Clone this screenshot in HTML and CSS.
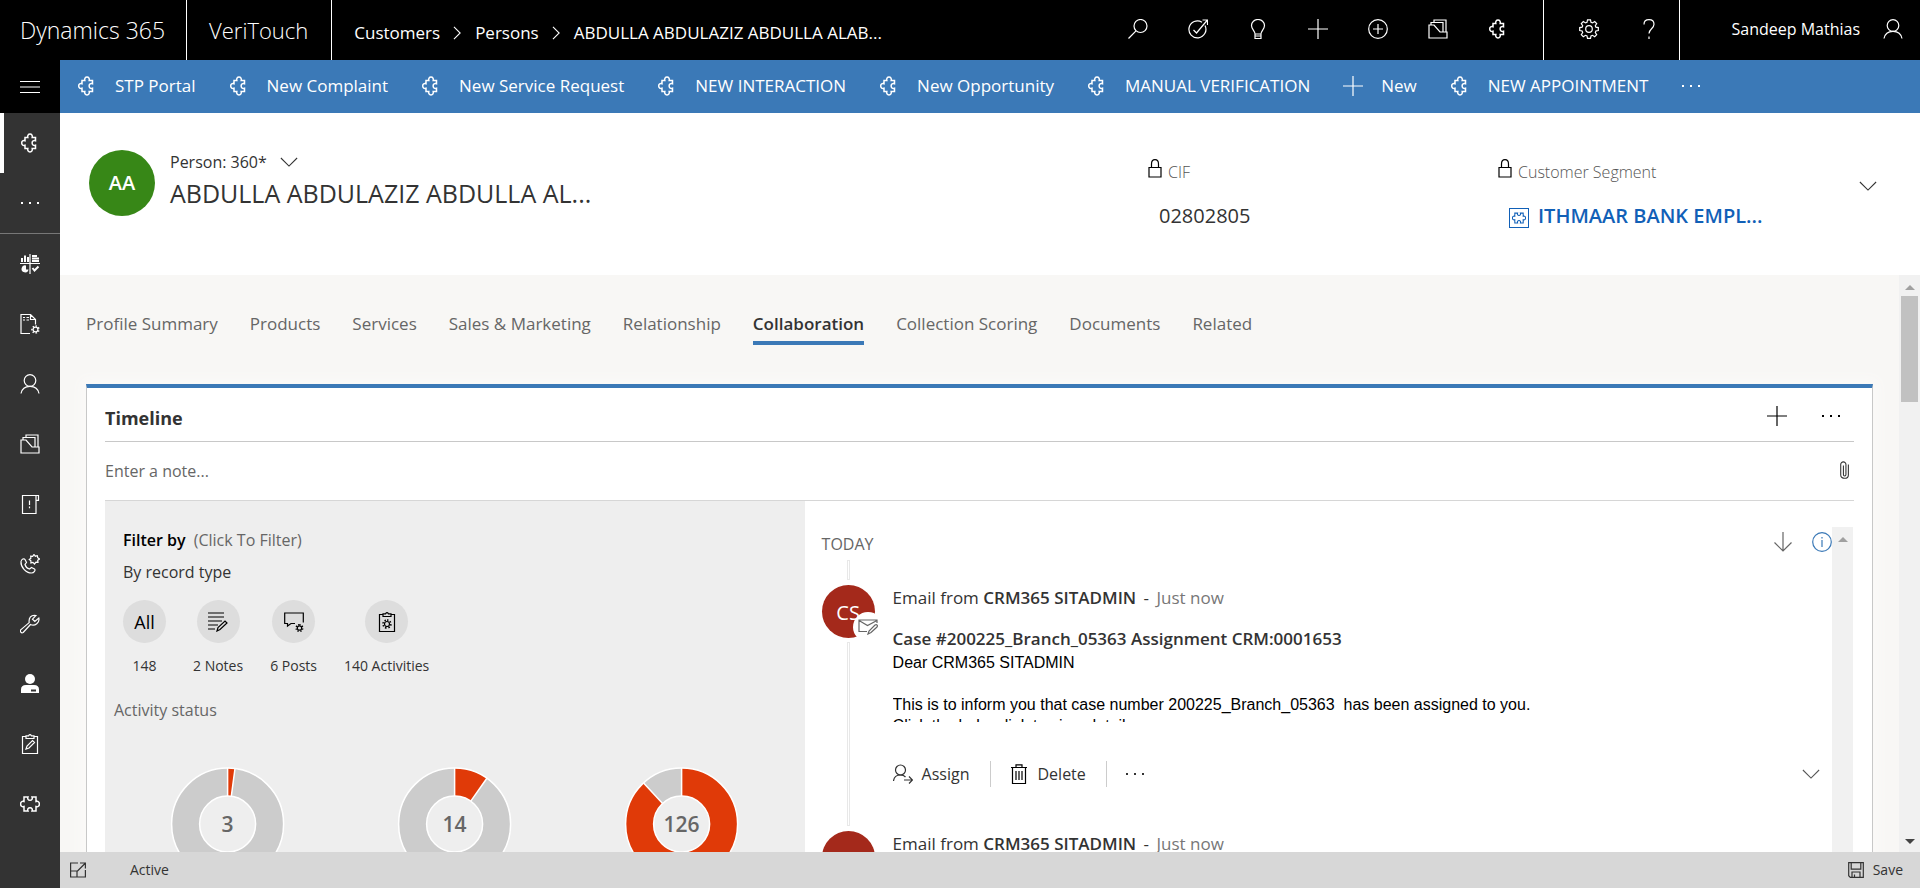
FILE: index.html
```
<!DOCTYPE html>
<html lang="en">
<head>
<meta charset="utf-8">
<title>Person: 360</title>
<link rel="stylesheet" href="styles.css">
</head>
<body>
<svg class="sprite" aria-hidden="true">
  <symbol id="puzzle" viewBox="0 0 20 20"><path stroke-width="1.500" d="M5 4.500h2.800c-.5-1.800.4-3.500 2.200-3.500s2.700 1.700 2.200 3.500H15.500v3.300c-1.800-.6-3.400.3-3.400 2.200s1.600 2.800 3.400 2.200v3.300h-3.300c.5 1.800-.4 3.500-2.200 3.500s-2.700-1.700-2.200-3.500H5v-3.300c-1.800.6-3.300-.3-3.300-2.200s1.500-2.800 3.300-2.200z"/></symbol>
  <symbol id="piece" viewBox="0 0 20 20"><path stroke-width="1.500" d="M4 3h4c-.8 2 .2 3.300 2 3.300S12.800 5 12 3h4v4.500c1.900-.7 3.400.5 3.400 2.500s-1.500 3.200-3.400 2.500V17h-4c.8-2-.2-3.300-2-3.300S7.200 15 8 17H4v-4.500C2.100 13.200.6 12 .6 10S2.100 6.800 4 7.500z"/></symbol>
  <symbol id="plus" viewBox="0 0 20 20"><path d="M10 0v20M0 10h20"/></symbol>
  <symbol id="dots" viewBox="0 0 20 20"><path class="solid" d="M1 9h2v2H1zM9 9h2v2H9zM17 9h2v2h-2z"/></symbol>
  <symbol id="right" viewBox="0 0 10 18"><path d="M1 2l7 7-7 7"/></symbol>
  <symbol id="down" viewBox="0 0 20 12"><path d="M1 1l9 9 9-9"/></symbol>
  <symbol id="search" viewBox="0 0 20 20"><circle cx="12.500" cy="7" r="6.500"/><path d="M8 11.800L.5 19.500"/></symbol>
  <symbol id="task" viewBox="0 0 20 20"><path d="M14 3.200A8.500 8.500 0 1 0 17 6.500M5.500 11l3 3L19 1.500M14.500 1h5v5"/></symbol>
  <symbol id="bulb" viewBox="0 0 20 20"><path d="M7 15c0-3-3.500-5-3.500-8.500a6.500 6 0 0 1 13 0C16.500 10 13 12 13 15zM7 15v4.500h6V15M7 17h6"/></symbol>
  <symbol id="addcircle" viewBox="0 0 20 20"><circle cx="10" cy="10" r="9.300"/><path d="M10 5v10M5 10h10"/></symbol>
  <symbol id="folder" viewBox="0 0 20 20"><path d="M1 19V6h5l6 7h7v6zM3 6V3.500h12V13M6 3.500V1h12v12"/></symbol>
  <symbol id="gear" viewBox="0 0 20 20"><path d="M8.500.8h3l.5 2.500 1.500.6 2.200-1.400 2 2-1.400 2.200.6 1.500 2.400.4v2.900l-2.400.5-.6 1.500 1.400 2.200-2 2-2.200-1.400-1.500.6-.5 2.400h-3L8 16.900l-1.500-.6-2.200 1.400-2-2 1.400-2.200-.6-1.500-2.400-.5V8.600l2.400-.4.6-1.500-1.400-2.200 2-2 2.200 1.400L8 3.300z"/><circle cx="10" cy="10" r="3.300"/></symbol>
  <symbol id="help" viewBox="0 0 20 20"><path d="M5 5.500C5 2.500 7 .7 10 .7s5 1.800 5 4.600c0 4.200-5 4.700-5 9.200M10 17.500V20"/></symbol>
  <symbol id="person" viewBox="0 0 20 20"><circle cx="10" cy="6.500" r="5.800"/><path d="M1 19.500c.8-4.500 4-7.200 9-7.200s8.200 2.700 9 7.200"/></symbol>
  <symbol id="personfill" viewBox="0 0 20 20"><circle class="solid" cx="10" cy="5" r="5"/><path class="solid" d="M1 19v-3.500Q1 11 6 11h8q5 0 5 4.500V19zM11 15.500v2h5v-2z" fill-rule="evenodd"/></symbol>
  <symbol id="menu" viewBox="0 0 20 20"><path stroke-width="1" d="M0 4.500h20M0 10h20M0 15.500h20"/></symbol>
  <symbol id="dash" viewBox="0 0 20 20"><path d="M10 0v20M0 9.500h20"/><path stroke-width="2" d="M2 8V4M5 8V1.500M8 8V3M12 2h5M12 4.500h7M12 7h7M12.500 14l2 2.500 4-4"/><path class="solid" d="M6 11.500a3.500 3.500 0 1 0 2.500 4H6z"/></symbol>
  <symbol id="docgear" viewBox="0 0 20 20"><path d="M10 19.500H1v-19h9.500l5 5v5M10.500.5v5h5M3 3.500h2M6.500 3.500H9M3 6h2M6.500 6H9"/><circle cx="15.500" cy="15.500" r="2.400"/><path stroke-dasharray="1.400 1.600" stroke-width="1.500" d="M15.500 12a3.500 3.500 0 1 1-.1 0"/></symbol>
  <symbol id="book" viewBox="0 0 20 20"><path d="M2.500 1.500H16v18H2.500zM15 1.500h3.500v4.800H16M9.500 6.500V11M9.500 12.500v1.700"/></symbol>
  <symbol id="phone" viewBox="0 0 20 20"><path d="M1 7.500C1.500 5 4 4 5 5.500l1.500 3L5 10.500c.5 2 2.500 4 4.500 4.500l2-1.500 3 1.500c1.500 1-.5 4-3 4C6 19 .5 13 1 7.500z"/><path d="M14 .5l1.300 1.700 2-.5.4 2L19.500 5l-1.800 1.300.3 2-2-.1L14.500 10l-1.600-1.600-2 .5V6.700L9.300 5.500l1.600-1.300-.2-2 2 .2z"/></symbol>
  <symbol id="wrench" viewBox="0 0 20 20"><path d="M10.500 10.500l-7.300 8c-2 1-3.500-1-2.500-2.700l8.500-7.200C8.500 4 11 .5 16 1.500l-3.500 3.700 2.300 2.300L18.800 4c1.200 4.500-3.800 8.500-8.300 6.500z"/></symbol>
  <symbol id="clippen" viewBox="0 0 20 20"><path d="M6 2.500H2.500v17h15v-17H14M6 1.800h2.500Q10-.5 11.500 1.800H14v2.700H6zM6 15l1-3 5.500-5.500 2 2L9 14z"/></symbol>
  <symbol id="clipgear" viewBox="0 0 20 20"><path d="M6 2.500H2.500v17h15v-17H14M6 1.800h2.500Q10-.5 11.500 1.800H14v2.700H6z"/><circle cx="10" cy="12" r="2.500"/><path stroke-dasharray="1.500 1.640" stroke-width="1.500" d="M10 8a4 4 0 1 1-.1 0"/></symbol>
  <symbol id="lock" viewBox="0 0 14 19"><path d="M1 8.500h12v9.500H1zM3.500 8.500V5C3.500 2 5 .7 7 .7s3.500 1.300 3.500 4.300v3.500"/></symbol>
  <symbol id="clip" viewBox="0 0 10 20"><path d="M9.300 4v11.500c0 5-8.500 5-8.500 0V4c0-4 5.800-4 5.800 0v11c0 2.200-2.800 2.200-2.800 0V5"/></symbol>
  <symbol id="arrow" viewBox="0 0 20 20"><path d="M10 0v19M1.500 10.500L10 19l8.500-8.500"/></symbol>
  <symbol id="info" viewBox="0 0 20 20"><circle cx="10" cy="10" r="9.300"/><path d="M10 8v7M10 5v1.500"/></symbol>
  <symbol id="notes" viewBox="0 0 20 20"><path d="M0 1h16M0 5h16M0 9h14M0 13h10M0 17h7M9 19l1-3.500 7-6.500 2 2-7 6.500z"/></symbol>
  <symbol id="posts" viewBox="0 0 20 20"><path d="M11 11.500H7L3.500 14v-2.500H.7V1h18.600v9.500"/><circle cx="15.500" cy="16" r="2.200"/><path stroke-dasharray="1.200 1.430" stroke-width="1.500" d="M15.500 12.700a3.300 3.300 0 1 1-.1 0"/></symbol>
  <symbol id="mail" viewBox="0 0 20 16"><path d="M9 12.500H1V1h18v3M1 1.500l8.500 5 9.500-5M10 15l1-3 6-6c2-1 3 .5 2 2l-6 5.500z"/></symbol>
  <symbol id="assign" viewBox="0 0 20 20"><circle cx="7.500" cy="6" r="5"/><path d="M.5 17c.5-4 3-6 7-6 2.500 0 4 .8 5 2M11 16h8M16 12.500l3.500 3.500-3.500 3.500"/></symbol>
  <symbol id="trash" viewBox="0 0 16 20"><path d="M0 3.500h16M5 3V.8h6V3M1.500 3.500v16h13v-16M5 7v9M8 7v9M11 7v9"/></symbol>
  <symbol id="popout" viewBox="0 0 16 16"><path d="M8 1H.6v14h14.800V8M.6 9H7v6M7.500 9L15 1.500M10 1h5.400v5.500"/></symbol>
  <symbol id="save" viewBox="0 0 16 16"><path d="M.7.7h14.600v14.600h-13L.7 13.700zM3.200.7v6.500h9.600V.7M4 15v-5h8v5M6.500 15v-2.500"/></symbol>
</svg>

<header class="topbar">
  <div class="brand">Dynamics 365</div>
  <div class="app">VeriTouch</div>
  <nav class="crumbs">
    <a href="#">Customers</a><svg class="crumb-sep"><use href="#right"/></svg>
    <a href="#">Persons</a><svg class="crumb-sep"><use href="#right"/></svg>
    <a href="#">ABDULLA ABDULAZIZ ABDULLA ALAB...</a>
  </nav>
  <div class="tools">
    <button aria-label="Search"><svg class="ic"><use href="#search"/></svg></button>
    <button aria-label="Tasks"><svg class="ic"><use href="#task"/></svg></button>
    <button aria-label="Insights"><svg class="ic"><use href="#bulb"/></svg></button>
    <button aria-label="New"><svg class="ic"><use href="#plus"/></svg></button>
    <button aria-label="Quick create"><svg class="ic"><use href="#addcircle"/></svg></button>
    <button aria-label="Records"><svg class="ic"><use href="#folder"/></svg></button>
    <button aria-label="Extensions"><svg class="ic"><use href="#puzzle"/></svg></button>
  </div>
  <div class="tools settings">
    <button aria-label="Settings"><svg class="ic"><use href="#gear"/></svg></button>
    <button aria-label="Help"><svg class="ic"><use href="#help"/></svg></button>
  </div>
  <button class="user">Sandeep Mathias <svg class="ic"><use href="#person"/></svg></button>
</header>

<div class="shell">
  <nav class="side">
    <button class="side-menu" aria-label="Menu"><svg class="ic"><use href="#menu"/></svg></button>
    <button class="on" aria-label="Home"><svg class="ic"><use href="#puzzle"/></svg></button>
    <button class="ruled" aria-label="More"><svg class="ic"><use href="#dots"/></svg></button>
    <button aria-label="Dashboards"><svg class="ic"><use href="#dash"/></svg></button>
    <button aria-label="Processes"><svg class="ic"><use href="#docgear"/></svg></button>
    <button aria-label="Persons"><svg class="ic"><use href="#person"/></svg></button>
    <button aria-label="Accounts"><svg class="ic"><use href="#folder"/></svg></button>
    <button aria-label="Cases"><svg class="ic"><use href="#book"/></svg></button>
    <button aria-label="Calls"><svg class="ic"><use href="#phone"/></svg></button>
    <button aria-label="Service"><svg class="ic"><use href="#wrench"/></svg></button>
    <button aria-label="Contacts"><svg class="ic"><use href="#personfill"/></svg></button>
    <button aria-label="Activities"><svg class="ic"><use href="#clippen"/></svg></button>
    <button aria-label="Extensions"><svg class="ic"><use href="#piece"/></svg></button>
  </nav>

  <div class="page">
    <div class="commands">
      <button><svg class="ic"><use href="#puzzle"/></svg>STP Portal</button>
      <button><svg class="ic"><use href="#puzzle"/></svg>New Complaint</button>
      <button><svg class="ic"><use href="#puzzle"/></svg>New Service Request</button>
      <button><svg class="ic"><use href="#puzzle"/></svg>NEW INTERACTION</button>
      <button><svg class="ic"><use href="#puzzle"/></svg>New Opportunity</button>
      <button><svg class="ic"><use href="#puzzle"/></svg>MANUAL VERIFICATION</button>
      <button><svg class="ic"><use href="#plus"/></svg>New</button>
      <button><svg class="ic"><use href="#puzzle"/></svg>NEW APPOINTMENT</button>
      <button aria-label="More commands"><svg class="ic"><use href="#dots"/></svg></button>
    </div>

    <section class="record">
      <div class="avatar">AA</div>
      <div class="identity">
        <button class="form-pick">Person: 360* <svg class="chev"><use href="#down"/></svg></button>
        <h1>ABDULLA ABDULAZIZ ABDULLA AL...</h1>
      </div>
      <dl class="field">
        <dt><svg class="lock"><use href="#lock"/></svg>CIF</dt>
        <dd>02802805</dd>
      </dl>
      <dl class="field">
        <dt><svg class="lock"><use href="#lock"/></svg>Customer Segment</dt>
        <dd><a href="#"><svg class="entity"><use href="#piece"/></svg>ITHMAAR BANK EMPL...</a></dd>
      </dl>
      <button class="expand" aria-label="Expand header"><svg class="chev"><use href="#down"/></svg></button>
    </section>

    <div class="scroller">
      <main class="content">
        <nav class="tabs">
          <a href="#">Profile Summary</a><a href="#">Products</a><a href="#">Services</a><a href="#">Sales &amp; Marketing</a><a href="#">Relationship</a><a href="#" class="current">Collaboration</a><a href="#">Collection Scoring</a><a href="#">Documents</a><a href="#">Related</a>
        </nav>
        <section class="card">
          <div class="card-head">
            <h2>Timeline</h2>
            <button aria-label="Add"><svg class="ic"><use href="#plus"/></svg></button>
            <button aria-label="More"><svg class="ic"><use href="#dots"/></svg></button>
          </div>
          <div class="note">
            <input type="text" aria-label="Note" placeholder="Enter a note...">
            <button aria-label="Attach"><svg class="clip"><use href="#clip"/></svg></button>
          </div>
          <div class="split">
            <aside class="filter">
              <p class="filter-title"><b>Filter by</b> (Click To Filter)</p>
              <p class="filter-sub">By record type</p>
              <div class="types">
                <button><span class="disc">All</span>148</button>
                <button><span class="disc"><svg class="ic"><use href="#notes"/></svg></span>2 Notes</button>
                <button><span class="disc"><svg class="ic"><use href="#posts"/></svg></span>6 Posts</button>
                <button><span class="disc"><svg class="ic"><use href="#clipgear"/></svg></span>140 Activities</button>
              </div>
              <p class="status">Activity status</p>
              <div class="donuts">
                <svg class="donut" viewBox="-57 -57 114 114"><circle class="rest" r="42"/><circle class="part" r="42" pathLength="100" stroke-dasharray="2.100 97.900" transform="rotate(-90)"/><path class="cut" d="M0-28V-56M3.700-27.700L7.400-55.500"/><circle class="edge" r="56"/><circle class="edge" r="28"/><text y="8">3</text></svg>
                <svg class="donut" viewBox="-57 -57 114 114"><circle class="rest" r="42"/><circle class="part" r="42" pathLength="100" stroke-dasharray="9.800 90.200" transform="rotate(-90)"/><path class="cut" d="M0-28V-56M16.200-22.900L32.300-45.700"/><circle class="edge" r="56"/><circle class="edge" r="28"/><text y="8">14</text></svg>
                <svg class="donut" viewBox="-57 -57 114 114"><circle class="rest" r="42"/><circle class="part" r="42" pathLength="100" stroke-dasharray="88.100 11.900" transform="rotate(-90)"/><path class="cut" d="M0-28V-56M-19-20.500L-38-41"/><circle class="edge" r="56"/><circle class="edge" r="28"/><text y="8">126</text></svg>
              </div>
            </aside>
            <div class="feed">
              <div class="feed-list">
                <div class="day">
                  <h3>TODAY</h3>
                  <button aria-label="Sort"><svg class="ic"><use href="#arrow"/></svg></button>
                  <button class="info" aria-label="Info"><svg class="ic"><use href="#info"/></svg></button>
                </div>
                <div class="lead"></div>
                <article class="entry">
                  <div class="rail">
                    <div class="who">CS<span class="badge"><svg class="mail"><use href="#mail"/></svg></span></div>
                    <div class="line"></div>
                  </div>
                  <div class="entry-main">
                    <p class="from">Email from <b>CRM365 SITADMIN</b> <i>-</i> <span>Just now</span></p>
                    <h4>Case #200225_Branch_05363 Assignment CRM:0001653</h4>
                    <div class="mail-body">Dear CRM365 SITADMIN<br><br>This is to inform you that case number 200225_Branch_05363&nbsp; has been assigned to you.<br>Click the below link to view details</div>
                    <div class="actions">
                      <button><svg class="ic"><use href="#assign"/></svg>Assign</button>
                      <button><svg class="trash"><use href="#trash"/></svg>Delete</button>
                      <button class="plain" aria-label="More"><svg class="ic"><use href="#dots"/></svg></button>
                      <button class="plain more" aria-label="Expand"><svg class="chev"><use href="#down"/></svg></button>
                    </div>
                  </div>
                </article>
                <article class="entry">
                  <div class="rail"><div class="who">CS</div></div>
                  <div class="entry-main">
                    <p class="from">Email from <b>CRM365 SITADMIN</b> <i>-</i> <span>Just now</span></p>
                  </div>
                </article>
              </div>
              <div class="bar"><span class="up"></span></div>
            </div>
          </div>
        </section>
      </main>
      <div class="bar main-bar"><span class="up"></span><span class="thumb"></span><span class="dn"></span></div>
    </div>

    <footer class="foot">
      <button aria-label="Pop out"><svg class="sm"><use href="#popout"/></svg></button>
      <span class="state">Active</span>
      <button class="save"><svg class="sm"><use href="#save"/></svg>Save</button>
    </footer>
  </div>
</div>
</body>
</html>
```
FILE: styles.css
```
* { box-sizing: border-box; margin: 0; padding: 0; }
body {
  height: 100vh;
  display: flex;
  flex-direction: column;
  overflow: hidden;
  font-family: "Open Sans", "Noto Sans", sans-serif;
  font-size: 16px;
  line-height: 24px;
  color: #333;
  background: #fff;
}
button, input { font: inherit; color: inherit; background: none; border: 0; }
button { display: flex; align-items: center; white-space: nowrap; }
a { color: inherit; text-decoration: none; }
svg { flex: none; fill: none; stroke: currentColor; stroke-width: 1.2; overflow: visible; }
.solid { fill: currentColor; stroke: none; }
.sprite { position: absolute; width: 0; height: 0; }
.ic { width: 20px; height: 20px; }
.sm { width: 16px; height: 16px; }
.chev { width: 18px; height: 11px; }

.topbar { flex: none; display: flex; height: 60px; background: #000; color: #fff; }
.brand, .app {
  display: flex; align-items: center;
  padding: 0 21px 0 20px;
  border-right: 1px solid #fff;
  font-size: 23px; font-weight: 300; line-height: 32px;
}
.app { padding: 0 23px 0 22px; font-size: 22px; }
.crumbs { display: flex; align-items: center; padding: 6px 0 0 22px; white-space: nowrap; font-size: 17px; }
.crumb-sep { width: 9px; height: 16px; margin: 0 13px; }
.tools { display: flex; padding-right: 15px; margin-left: auto; }
.tools button { width: 60px; justify-content: center; }
.tools button, .user { padding-bottom: 2px; }
.settings { margin: 0; padding: 0 0 0 15px; border: solid #fff; border-width: 0 1px; }
.user { width: 240px; justify-content: flex-end; gap: 23px; padding-right: 17px; }

.shell { flex: 1; min-height: 0; display: flex; }
.side { flex: none; width: 60px; background: #333; color: #fff; }
.side button { width: 60px; height: 60px; justify-content: center; }
.side .side-menu { height: 53px; background: #000; }
.side .on { border-left: 4px solid #fff; padding-right: 4px; }
.side .ruled { height: 61px; border-bottom: 1px solid #777; }

.page { flex: 1; min-width: 0; display: flex; flex-direction: column; }
.commands { flex: none; display: flex; height: 53px; padding: 0 0 2px 17px; gap: 33px; font-size: 17px; background: #3b79b7; color: #fff; }
.commands button { gap: 18px; }

.record { flex: none; display: flex; height: 162px; padding: 37px 32px 0 29px; }
.avatar {
  width: 66px; height: 66px; border-radius: 50%;
  background: #378717; color: #fff;
  display: flex; align-items: center; justify-content: center;
  font-size: 20px; font-weight: 600;
}
.identity { flex: 1; padding-left: 15px; }
.form-pick { gap: 13px; }
h1 { font-size: 25px; font-weight: 400; line-height: 38px; }
.field { width: 350px; padding-top: 9px; }
.field dt { display: flex; align-items: center; gap: 6px; font-weight: 300; color: #555; }
.lock { width: 14px; height: 19px; margin-bottom: 6px; color: #000; }
.field dd { padding: 18px 0 0 11px; font-size: 20px; line-height: 28px; }
.field a { display: flex; align-items: center; gap: 9px; font-weight: 600; color: #1160b7; }
.entity { width: 20px; height: 20px; padding: 2px; border: 1px solid; margin-top: 4px; }
.expand { width: 40px; height: 72px; justify-content: center; }

.scroller { flex: 1; min-height: 0; display: flex; overflow: hidden; background: #f8f7f5; }
.content { flex: 1; min-width: 0; padding: 37px 26px 0 26px; }
.tabs { display: flex; gap: 32px; font-size: 17px; color: #666; }
.tabs a { height: 33px; }
.tabs .current { color: #333; font-weight: 600; border-bottom: 4px solid #3b79b7; }
.card {
  margin-top: 39px; padding: 0 18px;
  border: 1px solid #c8c8c8; border-top: 4px solid #3b79b7;
  background: #fff; box-shadow: 0 0 12px 4px #fbfaf9;
}
.card-head { display: flex; height: 54px; border-bottom: 1px solid #c8c8c8; padding: 2px 13px 0 0; gap: 34px; color: #000; }
h2 { flex: 1; font-size: 18px; line-height: 56px; font-weight: 700; color: #333; }
.note { display: flex; height: 59px; border-bottom: 1px solid #d6d6d6; padding-right: 5px; }
.note input { flex: 1; outline: 0; }
.note input::placeholder { color: #666; opacity: 1; }
.note button { padding-bottom: 3px; }
.clip { width: 9px; height: 20px; }
.split { display: flex; }
.filter { width: 40%; padding: 27px 9px 0; background: #eee; height: 420px; }
.filter-title, .filter-sub, .types { padding-left: 9px; }
.filter-title { color: #666; }
.filter-title b { color: #000; font-weight: 600; margin-right: 4px; }
.filter-sub { padding-top: 8px; }
.types { display: flex; gap: 27px; padding-top: 16px; }
.types button { flex-direction: column; gap: 11px; font-size: 14px; }
.disc {
  display: flex; align-items: center; justify-content: center;
  width: 43px; height: 43px; border-radius: 50%;
  background: #ddd; color: #000; font-size: 18px;
}
.status { padding-top: 20px; color: #666; }
.donuts { display: flex; padding-top: 45px; }
.donut { flex: 1; height: 114px; }
.rest { stroke: #ccc; stroke-width: 28; }
.part { stroke: #e03a08; stroke-width: 28; }
.cut, .edge { stroke: #fff; stroke-width: 1.5; }
.donut text { fill: #666; stroke: none; font-size: 21px; font-weight: 600; text-anchor: middle; }

.feed { flex: 1; min-width: 0; display: flex; padding: 26px 1px 0 17px; }
.feed-list { flex: 1; min-width: 0; }
.day { display: flex; height: 33px; color: #666; gap: 19px; }
.day h3 { flex: 1; font-size: 16px; font-weight: 400; line-height: 35px; }
.day button { height: 29px; }
.day .info { color: #3b79b7; }
.lead { width: 3px; height: 20px; margin: 0 0 5px 25px; border: 1px solid #e8e8e8; }
.entry { display: flex; gap: 18px; }
.rail { width: 53px; display: flex; flex-direction: column; align-items: center; }
.who {
  position: relative; width: 53px; height: 53px; border-radius: 50%;
  background: #a4291b; color: #fff; font-size: 20px; line-height: 56px; text-align: center;
}
.badge {
  position: absolute; left: 31px; top: 27px; width: 30px; height: 30px;
  display: flex; align-items: center; justify-content: center;
  border-radius: 50%; background: #fff; color: #666;
}
.mail { width: 20px; height: 16px; }
.line { flex: 1; width: 3px; margin: 4px 0 5px; border: 1px solid #e8e8e8; }
.entry-main { flex: 1; min-width: 0; }
.from { font-size: 17px; line-height: 26px; }
.from b { font-weight: 600; }
.from i { font-style: normal; margin: 0 3px; }
.from span { color: #777; }
h4 { padding-top: 16px; font-size: 17px; line-height: 24px; font-weight: 600; }
.mail-body { margin-top: 1px; height: 70px; overflow: hidden; font-family: "Liberation Sans", Arial, sans-serif; font-size: 16px; line-height: 21px; color: #000; }
.actions { display: flex; height: 26px; margin: 39px 0 44px; }
.actions button { gap: 9px; padding-right: 20px; margin-right: 18px; border-right: 1px solid #ccc; }
.actions .plain { border: 0; margin: 0; padding: 0; }
.actions .more { margin-left: auto; padding-right: 12px; color: #555; }
.trash { width: 16px; height: 20px; margin: 0 2px; color: #000; }

.bar { position: relative; flex: none; width: 21px; background: #f1f1f1; display: flex; flex-direction: column; align-items: center; }
.up, .dn { border: 5px solid transparent; }
.up { border-bottom-color: #a0a0a0; border-top: 0; margin-top: 10px; }
.dn { border-top-color: #444; border-bottom: 0; margin: auto 0 8px; }
.thumb { width: 17px; height: 106px; margin-top: 6px; background: #c1c1c1; }

.foot { flex: none; display: flex; align-items: center; height: 36px; padding: 0 17px 0 10px; background: #d7d7d7; font-size: 14px; }
.state { padding-left: 44px; }
.save { margin-left: auto; gap: 9px; }
```
